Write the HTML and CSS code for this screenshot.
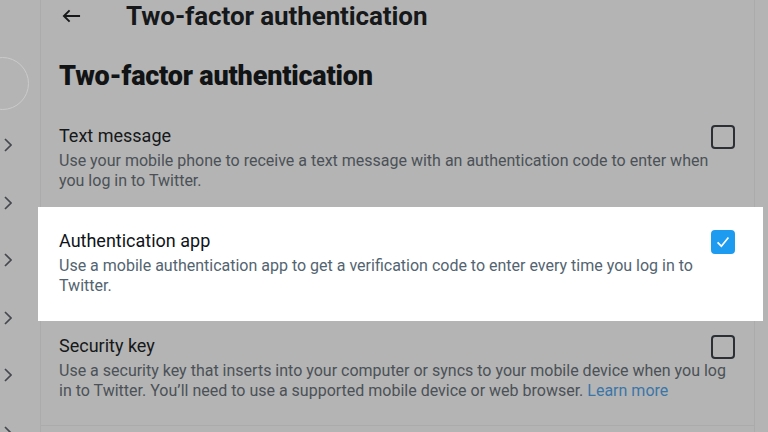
FILE: index.html
```html
<!DOCTYPE html>
<html>
<head>
<meta charset="utf-8">
<link rel="stylesheet" href="styles.css">
</head>
<body>
<div class="page">
  <aside class="side">
    <div class="avatar"></div>
    <ul class="chevrons">
      <li><svg viewBox="0 0 8 14" class="chev"><path d="M1 1 L7 7 L1 13"/></svg></li>
      <li><svg viewBox="0 0 8 14" class="chev"><path d="M1 1 L7 7 L1 13"/></svg></li>
      <li><svg viewBox="0 0 8 14" class="chev"><path d="M1 1 L7 7 L1 13"/></svg></li>
      <li><svg viewBox="0 0 8 14" class="chev"><path d="M1 1 L7 7 L1 13"/></svg></li>
      <li><svg viewBox="0 0 8 14" class="chev"><path d="M1 1 L7 7 L1 13"/></svg></li>
      <li><svg viewBox="0 0 8 14" class="chev"><path d="M1 1 L7 7 L1 13"/></svg></li>
    </ul>
  </aside>
  <main class="main">
    <header class="topbar">
      <svg class="back" viewBox="0 0 20 16"><path d="M19 8 H2 M8 2 L2 8 L8 14"/></svg>
      <span class="topbar-title">Two-factor authentication</span>
    </header>
    <h1 class="heading">Two-factor authentication</h1>
    <section class="option">
      <div class="option-head">
        <div class="option-title">Text message</div>
        <span class="box"></span>
      </div>
      <p class="option-desc">Use your mobile phone to receive a text message with an authentication code to enter when you log in to Twitter.</p>
    </section>
    <section class="option option-active">
      <div class="option-head">
        <div class="option-title">Authentication app</div>
        <span class="box box-checked"><svg viewBox="0 0 24 24"><path d="M5.5 12.5 L10 17 L18.5 6.5"/></svg></span>
      </div>
      <p class="option-desc">Use a mobile authentication app to get a verification code to enter every time you log in to Twitter.</p>
    </section>
    <section class="option option-last">
      <div class="option-head">
        <div class="option-title">Security key</div>
        <span class="box"></span>
      </div>
      <p class="option-desc">Use a security key that inserts into your computer or syncs to your mobile device when you log in to Twitter. You’ll need to use a supported mobile device or web browser. <a class="link">Learn more</a></p>
    </section>
  </main>
</div>
</body>
</html>
```
FILE: styles.css
```css
html, body {
  margin: 0;
  padding: 0;
}
body {
  background: #b4b4b4;
  font-family: Roboto, "Liberation Sans", sans-serif;
  width: 768px;
  height: 432px;
  overflow: hidden;
}
.page {
  display: flex;
  height: 432px;
}
.side {
  width: 40px;
  flex: none;
  overflow: hidden;
}
.avatar {
  width: 51px;
  height: 51px;
  border: 1px solid #cbcbcb;
  border-radius: 50%;
  margin: 57px 0 0 -24px;
}
.chevrons {
  list-style: none;
  margin: 28px 0 0 0;
  padding: 0;
  display: flex;
  flex-direction: column;
  gap: 43.5px;
}
.chevrons li {
  height: 14px;
  padding-left: 4px;
}
.chev {
  width: 8px;
  height: 14px;
  fill: none;
  stroke: #45494d;
  stroke-width: 1.7;
  display: block;
}
.main {
  width: 713px;
  flex: none;
  border-left: 1px solid #ababab;
  border-right: 1px solid #ababab;
}
.topbar {
  height: 31px;
  display: flex;
  align-items: center;
  padding-left: 21px;
  gap: 45px;
}
.back {
  width: 19px;
  height: 16px;
  fill: none;
  stroke: #16181a;
  stroke-width: 2;
}
.topbar-title {
  font-family: Roboto, sans-serif;
  font-weight: 700;
  font-size: 26px;
  color: #16181a;
  letter-spacing: -0.1px;
}
.heading {
  margin: 29px 0 10px 18px;
  font-size: 27px;
  line-height: 32px;
  font-weight: 900;
  color: #111315;
  letter-spacing: -0.2px;
}
.option {
  position: relative;
  padding: 22px 19px 16px 18px;
  height: 67px;
}
.option-last {
  height: 75px;
  border-bottom: 1px solid #ababab;
}
.option-active::before {
  content: "";
  position: absolute;
  top: 0;
  bottom: -9px;
  left: -3px;
  right: -9px;
  background: #ffffff;
  z-index: -1;
}
.option-active {
  z-index: 0;
}
.option-head {
  display: flex;
  justify-content: space-between;
  align-items: flex-start;
  height: 24px;
}
.option-title {
  font-size: 18px;
  line-height: 24px;
  color: #16181a;
}
.option-active .option-title {
  color: #0f1419;
}
.option-desc {
  margin: 3px 0 0 0;
  font-size: 16px;
  line-height: 20px;
  color: #4b5157;
}
.option-active .option-desc {
  color: #536471;
}
.link {
  color: #3b76a8;
}
.box {
  width: 20px;
  height: 20px;
  border: 2px solid #2c3034;
  border-radius: 4px;
  margin-top: 1px;
  flex: none;
}
.box-checked {
  border-color: #1d9bf0;
  background: #1d9bf0;
  display: flex;
}
.box-checked svg {
  width: 20px;
  height: 20px;
  fill: none;
  stroke: #ffffff;
  stroke-width: 2;
}
```
